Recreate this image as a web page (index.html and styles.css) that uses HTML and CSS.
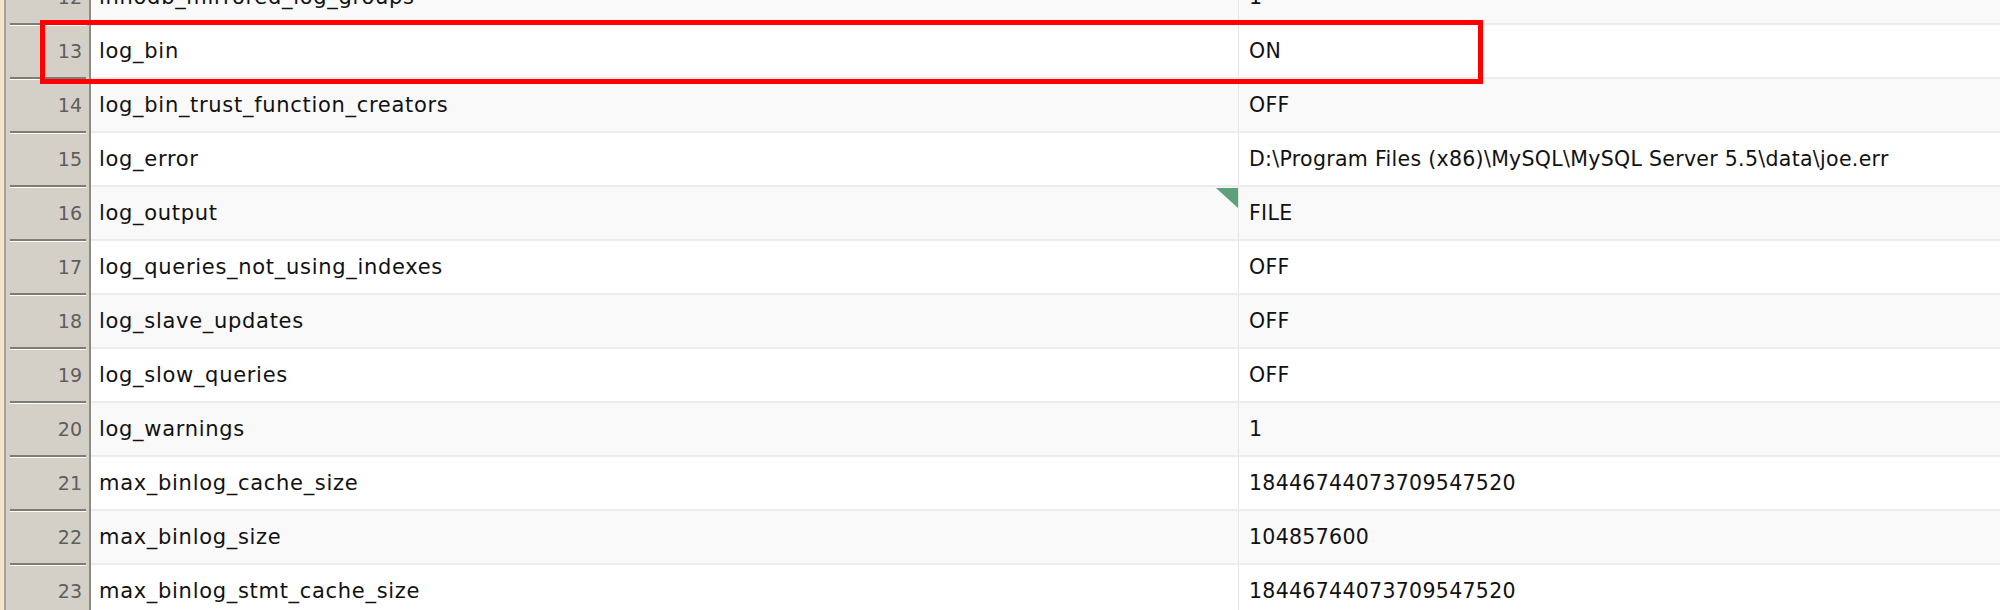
FILE: index.html
```html
<!DOCTYPE html>
<html lang="en">
<head>
    <meta charset="UTF-8">
    <title>Server Variables</title>
    <link rel="stylesheet" href="styles.css">
</head>
<body>
    <div class="grid">
        <div class="row even"><div class="num"><span>12</span></div><div class="name">innodb_mirrored_log_groups</div><div class="value">1</div></div>
        <div class="row"><div class="num"><span>13</span></div><div class="name">log_bin</div><div class="value">ON</div></div>
        <div class="row even"><div class="num"><span>14</span></div><div class="name">log_bin_trust_function_creators</div><div class="value">OFF</div></div>
        <div class="row"><div class="num"><span>15</span></div><div class="name">log_error</div><div class="value">D:\Program Files (x86)\MySQL\MySQL Server 5.5\data\joe.err</div></div>
        <div class="row even"><div class="num"><span>16</span></div><div class="name has-note">log_output</div><div class="value">FILE</div></div>
        <div class="row"><div class="num"><span>17</span></div><div class="name">log_queries_not_using_indexes</div><div class="value">OFF</div></div>
        <div class="row even"><div class="num"><span>18</span></div><div class="name">log_slave_updates</div><div class="value">OFF</div></div>
        <div class="row"><div class="num"><span>19</span></div><div class="name">log_slow_queries</div><div class="value">OFF</div></div>
        <div class="row even"><div class="num"><span>20</span></div><div class="name">log_warnings</div><div class="value">1</div></div>
        <div class="row"><div class="num"><span>21</span></div><div class="name">max_binlog_cache_size</div><div class="value">18446744073709547520</div></div>
        <div class="row even"><div class="num"><span>22</span></div><div class="name">max_binlog_size</div><div class="value">104857600</div></div>
        <div class="row"><div class="num"><span>23</span></div><div class="name">max_binlog_stmt_cache_size</div><div class="value">18446744073709547520</div></div>
    </div>

    <!-- highlight around the log_bin row -->
    <div class="highlight"></div>
</body>
</html>
```

FILE: styles.css
```css
body {
    margin: 0;
    background-color: #ffffff;
    font-family: "DejaVu Sans", Verdana, sans-serif;
    font-size: 20px;
    color: #111111;
    overflow: hidden;
    height: 610px;
}

.grid {
    margin-top: -31px;
    border-left: 4px solid #f2e4cd;
}

.row {
    display: grid;
    grid-template-columns: 87px 1148px 1fr;
    height: 54px;
}

.num {
    background-color: #d4d0c8;
    border-left: 2px solid #a3a19b;
    border-right: 2px solid #8d8b86;
    display: flex;
    padding: 0 3px 0 4px;
}

.num span {
    flex: 1;
    border-top: 2px solid #7e7c77;
    box-shadow: inset 0 1px 0 #ffffff;
    display: flex;
    align-items: center;
    justify-content: flex-end;
    padding-right: 4px;
    font-size: 19px;
    color: #5e5e5e;
}

.name,
.value {
    border-top: 2px solid #ececec;
    display: flex;
    align-items: center;
    white-space: nowrap;
}

.name {
    padding-left: 8px;
    border-right: 1px solid #e6e6e6;
    font-size: 21px;
    letter-spacing: 0.7px;
}

.value {
    padding-left: 10px;
    font-size: 20.5px;
    letter-spacing: 0.3px;
}

.even .name,
.even .value {
    background-color: #f9f9f9;
}

.has-note {
    position: relative;
}

.has-note::after {
    content: "";
    position: absolute;
    top: 1px;
    right: 0;
    width: 0;
    height: 0;
    border-top: 20px solid #5fa07c;
    border-left: 22px solid transparent;
}

.highlight {
    position: absolute;
    left: 40px;
    top: 20px;
    width: 1443px;
    height: 64px;
    box-sizing: border-box;
    border: 5px solid #ff0000;
}
```
